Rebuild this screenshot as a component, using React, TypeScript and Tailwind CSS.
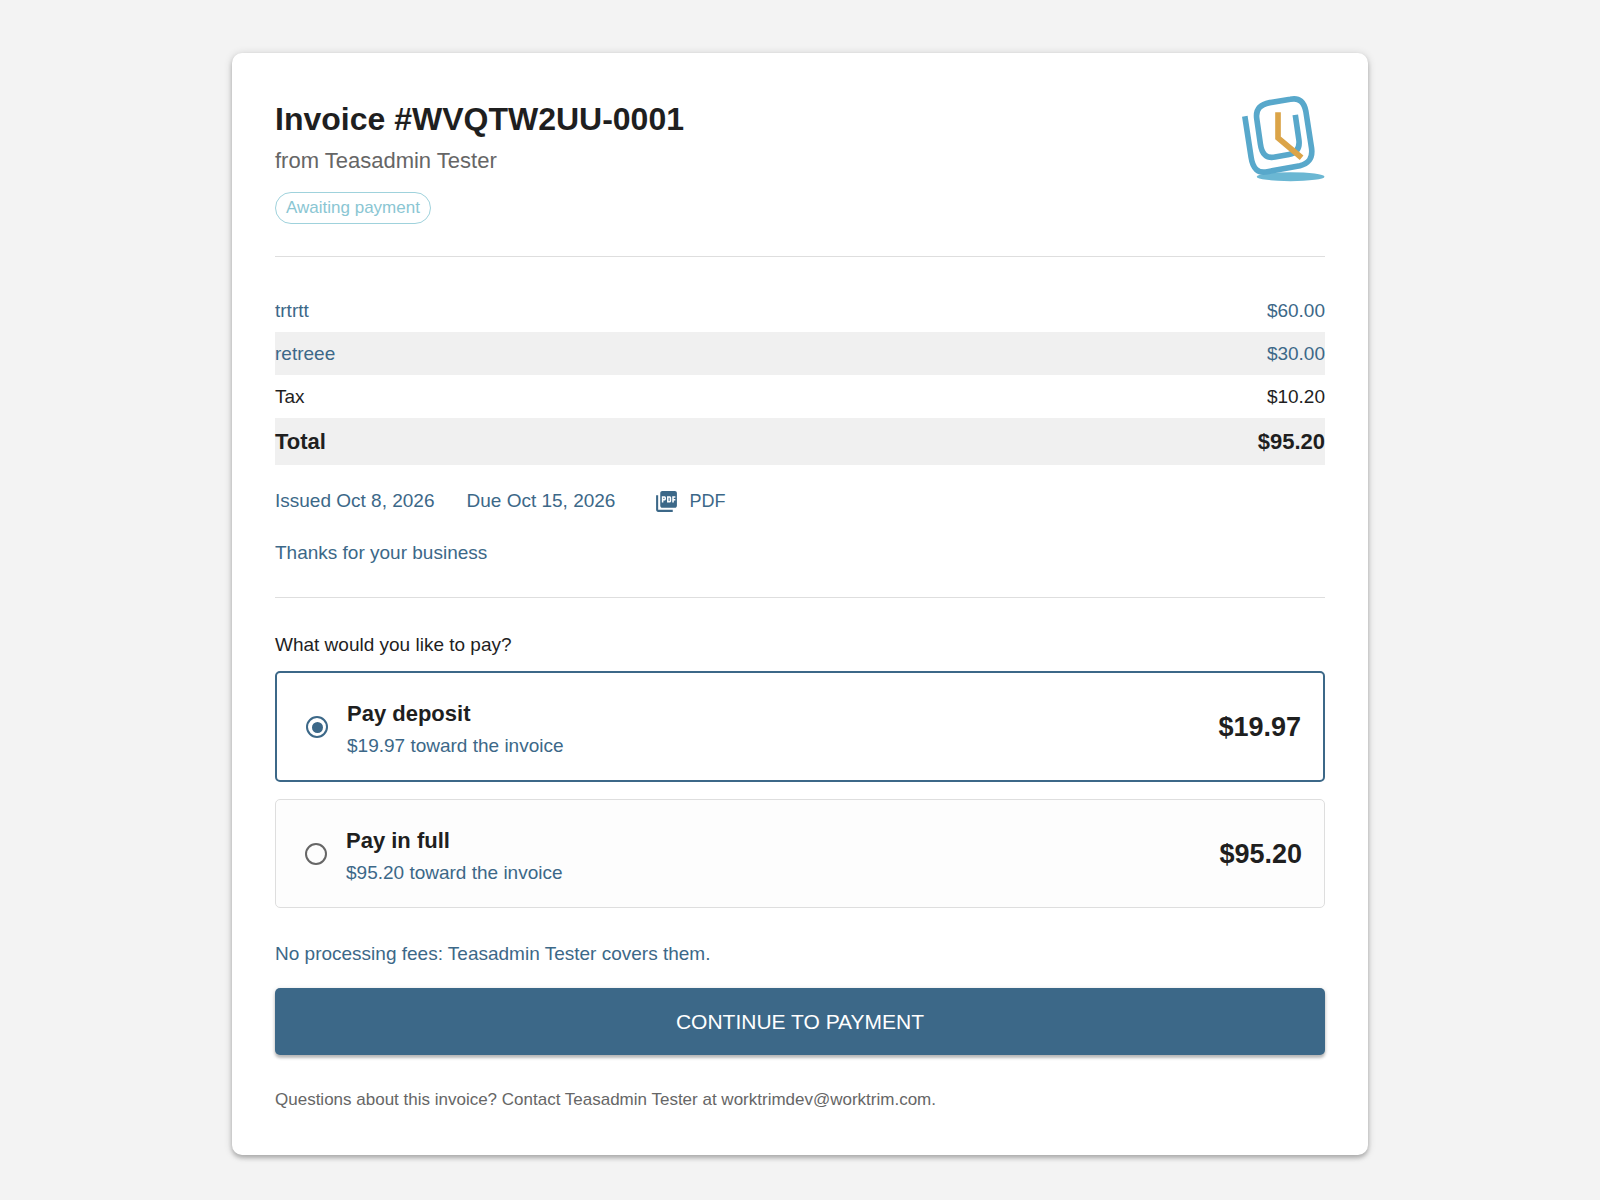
import { useState } from "react";
import { MdPictureAsPdf } from "react-icons/md";

const lines = [
  { label: "trtrtt", amount: "$60.00", style: "text-[#3c6888]" },
  { label: "retreee", amount: "$30.00", style: "text-[#3c6888] bg-[#f0f0f0]" },
  { label: "Tax", amount: "$10.20", style: "" },
];

const options = [
  { id: "deposit", title: "Pay deposit", amount: "$19.97" },
  { id: "full", title: "Pay in full", amount: "$95.20" },
];

function Logo() {
  return (
    <svg viewBox="62 47 255 262" className="h-[87px] w-[85px] shrink-0" fill="none" role="img" aria-label="Company logo">
      <ellipse cx="214" cy="290" rx="102" ry="13.5" fill="#6bb7d3" />
      <path
        d="M76 108 L95 232 C100 266 116 281 144 275 L242 257 C269 250 281 234 277 204 L260 94 C255 66 241 51 213 57 L151 67 C121 73 108 88 112 116 L123 192 C127 222 141 236 167 231 L209 223 C233 218 242 204 239 180 L228 104"
        stroke="#58a8cb"
        strokeWidth="17"
      />
      <path d="M176 96 V173 L247 233" stroke="#dba448" strokeWidth="17" />
    </svg>
  );
}

export default function App() {
  const [choice, setChoice] = useState("deposit");

  return (
    <div className="min-h-screen bg-[#f3f3f3] px-4 pt-[53px] pb-11 font-['Liberation_Sans',Arial,sans-serif] text-[19px] leading-[26px] text-[#1f1f1f]">
      <main className="mx-auto max-w-[1136px] rounded-[10px] bg-white p-[43px] shadow-[0_3px_4px_rgba(0,0,0,0.22),0_1px_8px_rgba(0,0,0,0.16)]">
        <header className="flex items-start justify-between border-b border-[#dedede] pb-8">
          <div>
            <h1 className="text-[32px] leading-[47px] font-bold">Invoice #WVQTW2UU-0001</h1>
            <p className="text-[22px] leading-[35px] text-[#666666]">from Teasadmin Tester</p>
            <span className="mt-3.5 flex h-8 w-fit items-center rounded-full border border-[#9fd2dc] px-2.5 text-[17px] text-[#8ac6d3]">
              Awaiting payment
            </span>
          </div>
          <Logo />
        </header>

        <table className="mt-8 w-full">
          <tbody>
            {lines.map((line) => (
              <tr key={line.label} className={line.style}>
                <th scope="row" className="h-[43px] text-left font-normal">{line.label}</th>
                <td className="text-right">{line.amount}</td>
              </tr>
            ))}
            <tr className="bg-[#f0f0f0] text-[22px] font-bold">
              <th scope="row" className="h-[47px] text-left">Total</th>
              <td className="text-right">$95.20</td>
            </tr>
          </tbody>
        </table>

        <div className="mt-5 flex h-8 items-center text-[#3c6888]">
          <span>Issued Oct 8, 2026</span>
          <span className="ml-8">Due Oct 15, 2026</span>
          <button type="button" className="ml-[39px] flex items-center gap-2.5 text-[18px]">
            <MdPictureAsPdf className="size-[25px]" />
            PDF
          </button>
        </div>
        <p className="mt-[23px] border-b border-[#dedede] pb-[31px] text-[#3c6888]">Thanks for your business</p>

        <fieldset className="mt-[34px]">
          <legend className="mb-[13px]">What would you like to pay?</legend>
          <div className="flex flex-col gap-[17px]">
            {options.map((option) => (
              <label
                key={option.id}
                className="flex cursor-pointer items-center rounded-[5px] border border-[#dedede] bg-[#fdfdfd] pt-[19px] pr-[22px] pb-[18px] pl-[29px] has-checked:border-2 has-checked:border-[#3c6888] has-checked:bg-white"
              >
                <input
                  type="radio"
                  name="payment"
                  value={option.id}
                  checked={choice === option.id}
                  onChange={() => setChoice(option.id)}
                  className="flex size-[22px] shrink-0 appearance-none items-center justify-center rounded-full border-2 border-[#666666] before:size-[11px] before:rounded-full checked:border-[#3c6888] checked:before:bg-[#3c6888]"
                />
                <span className="ml-[19px] flex grow flex-col pt-1.5">
                  <span className="text-[22px] leading-8 font-bold">{option.title}</span>
                  <span className="leading-8 text-[#3c6888]">{option.amount} toward the invoice</span>
                </span>
                <span className="text-[27px] leading-8 font-bold">{option.amount}</span>
              </label>
            ))}
          </div>
        </fieldset>

        <p className="mt-[33px] text-[#3c6888]">No processing fees: Teasadmin Tester covers them.</p>
        <button
          type="button"
          className="mt-[21px] h-[67px] w-full rounded-[5px] bg-[#3c6888] text-[21px] text-white uppercase shadow-[0_3px_3px_rgba(0,0,0,0.22),0_1px_5px_rgba(0,0,0,0.14)]"
        >
          Continue to payment
        </button>
        <p className="mt-[33px] text-[17px] leading-6 text-[#666666]">
          Questions about this invoice? Contact Teasadmin Tester at worktrimdev@worktrim.com.
        </p>
      </main>
    </div>
  );
}
